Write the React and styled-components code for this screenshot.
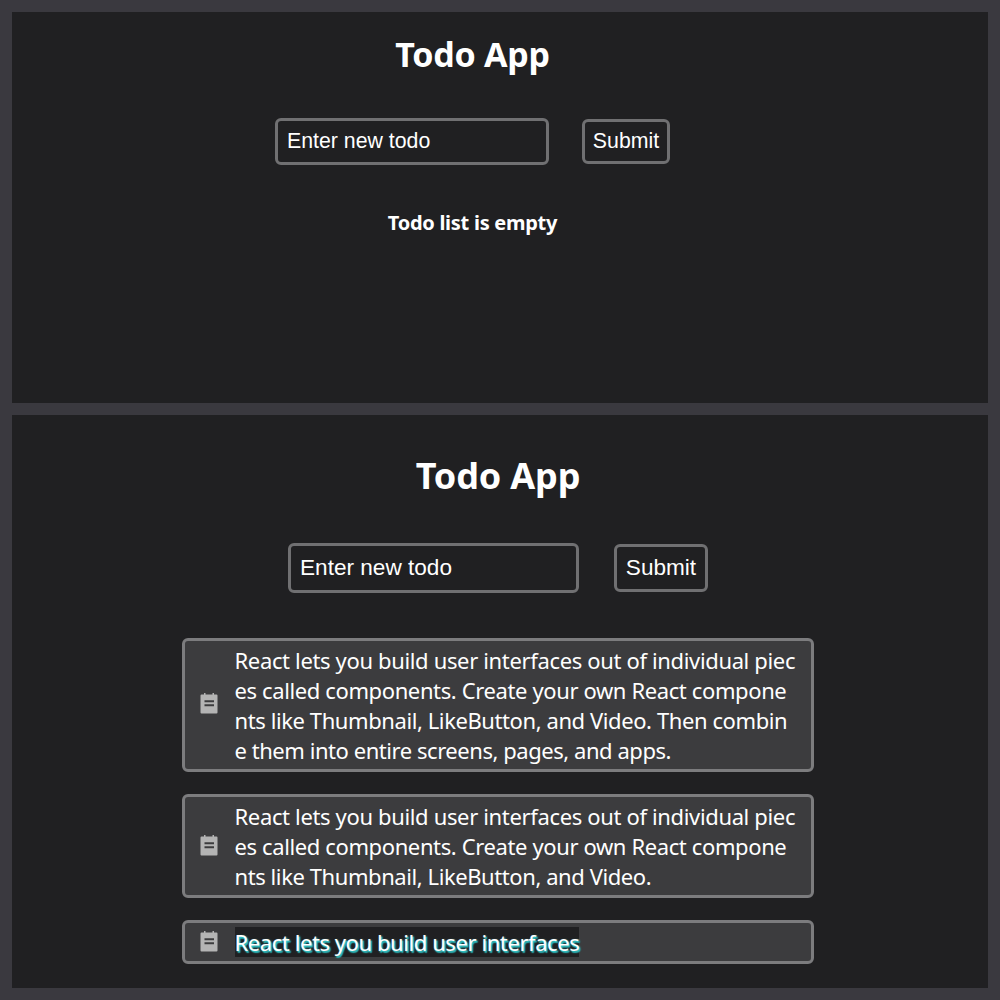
import React from "react";
import styled, { createGlobalStyle } from "styled-components";

const GlobalStyle = createGlobalStyle`
  * { box-sizing: border-box; }
  body { margin: 0; background: #3a393f; }
`;

const Page = styled.main`
  width: 1000px;
  height: 1000px;
  padding: 12px;
  display: flex;
  flex-direction: column;
  gap: 12px;
  background: #3a393f;
  color: #fff;
  font-family: "Noto Sans", "Open Sans", sans-serif;
`;

const Panel = styled.section`
  height: ${(p) => p.$height}px;
  flex: none;
  display: flex;
  flex-direction: column;
  align-items: center;
  padding-top: ${(p) => p.$top}px;
  padding-right: ${(p) => p.$right}px;
  background: #202022;
`;

const Title = styled.h1`
  margin: 0;
  font-size: ${(p) => p.$size}px;
  line-height: 48px;
  font-weight: 700;
  letter-spacing: ${(p) => p.$tracking}px;
  white-space: nowrap;
`;

const Form = styled.form`
  display: flex;
  align-items: center;
  gap: ${(p) => p.$gap}px;
  margin-top: ${(p) => p.$top}px;
`;

const Input = styled.input`
  width: ${(p) => p.$width}px;
  height: ${(p) => p.$height}px;
  padding: 0 9px;
  border: 3px solid #707072;
  border-radius: 6px;
  outline: none;
  background: transparent;
  color: #fff;
  font: ${(p) => p.$size}px "Liberation Sans", Arial, sans-serif;
  &::placeholder { color: #fff; opacity: 1; }
`;

const Button = styled.button`
  width: ${(p) => p.$width}px;
  height: ${(p) => p.$height}px;
  padding: 0;
  border: 3px solid #707072;
  border-radius: 6px;
  background: transparent;
  color: #fff;
  font: ${(p) => p.$size}px "Liberation Sans", Arial, sans-serif;
`;

const Empty = styled.p`
  margin: 43px 0 0;
  font-size: 20px;
  line-height: 30px;
  font-weight: 700;
  letter-spacing: -0.27px;
`;

const List = styled.ul`
  width: 632px;
  margin: 45px 0 0;
  padding: 0;
  list-style: none;
  display: flex;
  flex-direction: column;
  gap: 22px;
`;

const Item = styled.li`
  height: ${(p) => p.$height}px;
  display: flex;
  align-items: center;
  gap: 16.5px;
  padding: 0 12px 0 15px;
  border: 3px solid #7c7c7e;
  border-radius: 6px;
  background: #3c3c3e;
`;

const Icon = styled.svg`
  width: 18px;
  height: 22px;
  flex: none;
  margin-bottom: ${(p) => p.$lift}px;
`;

const Text = styled.div`
  font-size: 22px;
  line-height: 30px;
  white-space: nowrap;
`;

const Line = styled.span`
  display: block;
  width: max-content;
  letter-spacing: ${(p) => p.$tracking || 0}px;
`;

const Highlight = styled(Line)`
  background: #202022;
  text-shadow: 1px 1px 2px #35dfe2, 1.5px 1.5px 1px #279799;
`;

function NoteIcon({ lift }) {
  return (
    <Icon viewBox="0 0 18 22" $lift={lift}>
      <path fill="#b4b4b4" d="M1.5 2.5H4V1h1.5v1.5h7V1H14v1.5h2.5a1 1 0 0 1 1 1v17a1 1 0 0 1-1 1h-15a1 1 0 0 1-1-1v-17a1 1 0 0 1 1-1z" />
      <path fill="#3c3c3e" d="M4.5 8.2h9.5v2H4.5zM4.5 12.2h9.5v2H4.5z" />
    </Icon>
  );
}

const first = "React lets you build user interfaces out of individual piec";
const second = "es called components. Create your own React compone";

const todos = [
  {
    height: 134,
    lift: 4,
    lines: [
      [first, -0.35],
      [second, -0.38],
      ["nts like Thumbnail, LikeButton, and Video. Then combin", -0.41],
      ["e them into entire screens, pages, and apps.", -0.45],
    ],
  },
  {
    height: 104,
    lift: 3,
    lines: [
      [first, -0.35],
      [second, -0.38],
      ["nts like Thumbnail, LikeButton, and Video.", -0.42],
    ],
  },
  { height: 44, lift: 3, active: true, lines: [["React lets you build user interfaces", -0.42]] },
];

export default function App() {
  return (
    <>
      <GlobalStyle />
      <Page>
        <Panel $height={391} $top={18} $right={55}>
          <Title $size={34} $tracking={-0.25}>Todo App</Title>
          <Form $top={40} $gap={33} onSubmit={(e) => e.preventDefault()}>
            <Input $width={274} $height={47} $size={21.3} placeholder="Enter new todo" />
            <Button $width={88} $height={45} $size={21.3}>Submit</Button>
          </Form>
          <Empty>Todo list is empty</Empty>
        </Panel>
        <Panel $height={573} $top={37} $right={4}>
          <Title $size={36} $tracking={-0.15}>Todo App</Title>
          <Form $top={43} $gap={35} onSubmit={(e) => e.preventDefault()}>
            <Input $width={291} $height={50} $size={22.6} placeholder="Enter new todo" />
            <Button $width={94} $height={48} $size={22.6}>Submit</Button>
          </Form>
          <List>
            {todos.map((todo) => (
              <Item key={todo.height} $height={todo.height}>
                <NoteIcon lift={todo.lift} />
                <Text>
                  {todo.lines.map(([text, tracking]) =>
                    todo.active ? (
                      <Highlight key={text} $tracking={tracking}>{text}</Highlight>
                    ) : (
                      <Line key={text} $tracking={tracking}>{text}</Line>
                    )
                  )}
                </Text>
              </Item>
            ))}
          </List>
        </Panel>
      </Page>
    </>
  );
}
